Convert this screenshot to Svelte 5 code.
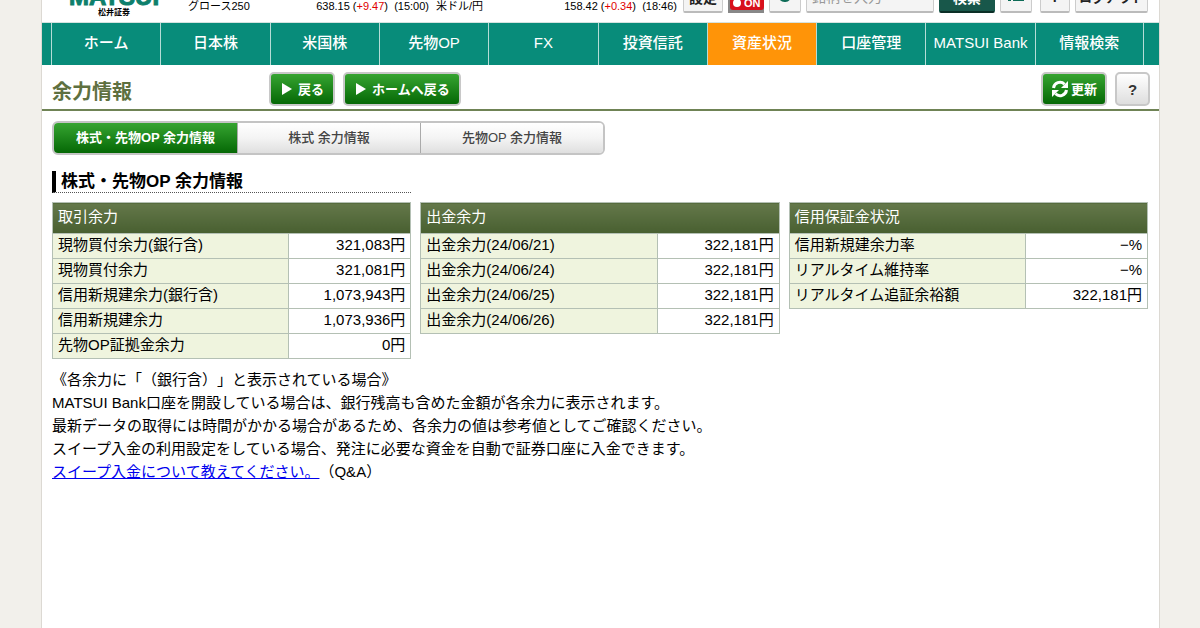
<script>
    const menu = ["ホーム", "日本株", "米国株", "先物OP", "FX", "投資信託", "資産状況", "口座管理", "MATSUI Bank", "情報検索"];
    const tabs = ["株式・先物OP 余力情報", "株式 余力情報", "先物OP 余力情報"];

    const tables = [
        {
            title: "取引余力",
            rows: [
                ["現物買付余力(銀行含)", "321,083円"],
                ["現物買付余力", "321,081円"],
                ["信用新規建余力(銀行含)", "1,073,943円"],
                ["信用新規建余力", "1,073,936円"],
                ["先物OP証拠金余力", "0円"],
            ],
        },
        {
            title: "出金余力",
            rows: [
                ["出金余力(24/06/21)", "322,181円"],
                ["出金余力(24/06/24)", "322,181円"],
                ["出金余力(24/06/25)", "322,181円"],
                ["出金余力(24/06/26)", "322,181円"],
            ],
        },
        {
            title: "信用保証金状況",
            rows: [
                ["信用新規建余力率", "−%"],
                ["リアルタイム維持率", "−%"],
                ["リアルタイム追証余裕額", "322,181円"],
            ],
        },
    ];

    let activeMenu = $state("資産状況");
    let activeTab = $state(0);
    let autoUpdate = $state(true);
    let keyword = $state("");
</script>

<div class="page">
    <header>
        <div class="logo">
            <span class="logo-name">MATSUI</span>
            <span class="logo-sub">松井証券</span>
        </div>
        <div class="ticker">
            <span>グロース250</span>
            <span>638.15 (<em>+9.47</em>)&nbsp; (15:00)</span>
        </div>
        <div class="ticker second">
            <span>米ドル/円</span>
            <span>158.42 (<em>+0.34</em>)&nbsp; (18:46)</span>
        </div>
        <div class="tools">
            <button class="tool setting">設定</button>
            <button class="switch" aria-pressed={autoUpdate} onclick={() => (autoUpdate = !autoUpdate)}>
                <span class="switch-face"><span class="knob"></span>ON</span>
            </button>
            <button class="tool icon" aria-label="再読込">
                <svg viewBox="0 0 16 16" width="16" height="16">
                    <path d="M13.5 6.5A6 6 0 1 1 9 2.2" fill="none" stroke="#0d6b57" stroke-width="2" />
                    <path d="M8 0l5 2.5L8.500 5.500z" fill="#0d6b57" />
                </svg>
            </button>
            <input class="tool" type="text" placeholder="銘柄を入力" aria-label="銘柄を入力" bind:value={keyword} />
            <button class="tool search">検索</button>
            <button class="tool icon list" aria-label="一覧">
                <svg viewBox="0 0 18 16" width="18" height="16">
                    <path d="M1 3h3M1 8h3M1 13h3M6 3h11M6 8h11M6 13h11" stroke="#0d6b57" stroke-width="2" />
                </svg>
            </button>
            <button class="tool help">?</button>
            <button class="tool logout">ログアウト</button>
        </div>
    </header>

    <nav>
        {#each menu as item}
            <a href="#menu" class:active={item === activeMenu} onclick={() => (activeMenu = item)}>{item}</a>
        {/each}
    </nav>

    <div class="title-bar">
        <h1>余力情報</h1>
        <button class="green"><span class="arrow"></span>戻る</button>
        <button class="green"><span class="arrow"></span>ホームへ戻る</button>
        <button class="green refresh">
            <svg viewBox="0 0 18 18" width="18" height="18">
                <path d="M2.500 8A6.500 6.500 0 0 1 13.500 4.200" fill="none" stroke="#fff" stroke-width="3" />
                <path d="M17 1v7h-7z" fill="#fff" />
                <path d="M15.500 10A6.500 6.500 0 0 1 4.500 13.800" fill="none" stroke="#fff" stroke-width="3" />
                <path d="M1 17v-7h7z" fill="#fff" />
            </svg>
            更新
        </button>
        <button class="question">?</button>
    </div>

    <main>
        <div class="tabs">
            {#each tabs as tab, i}
                <button class:active={i === activeTab} onclick={() => (activeTab = i)}>{tab}</button>
            {/each}
        </div>

        <div class="columns">
            <h2>株式・先物OP 余力情報</h2>
            {#each tables as table}
                <table>
                    <colgroup>
                        <col class="label-col" />
                        <col />
                    </colgroup>
                    <thead>
                        <tr><th colspan="2">{table.title}</th></tr>
                    </thead>
                    <tbody>
                        {#each table.rows as [label, value]}
                            <tr>
                                <th scope="row">{label}</th>
                                <td>{value}</td>
                            </tr>
                        {/each}
                    </tbody>
                </table>
            {/each}
        </div>

        <div class="notes">
            <p>《各余力に「（銀行含）」と表示されている場合》</p>
            <p>MATSUI Bank口座を開設している場合は、銀行残高も含めた金額が各余力に表示されます。</p>
            <p>最新データの取得には時間がかかる場合があるため、各余力の値は参考値としてご確認ください。</p>
            <p>スイープ入金の利用設定をしている場合、発注に必要な資金を自動で証券口座に入金できます。</p>
            <p><a href="#qa">スイープ入金について教えてください。</a>（Q&amp;A）</p>
        </div>
    </main>
</div>

<style>
    :global(body) {
        background: #f2f0eb;
    }

    .page {
        min-height: 100vh;
        margin: 0 40px 0 41px;
        box-sizing: border-box;
        background: #fff;
        border: solid #dcd9d3;
        border-width: 0 1px;
        color: #000;
        font-family: "Liberation Sans", "Noto Sans CJK JP", sans-serif;
        font-size: 15px;
        text-spacing-trim: space-all;
    }

    button,
    input {
        box-sizing: border-box;
        margin: 0;
        padding: 0;
        font-family: inherit;
        white-space: nowrap;
    }

    /* Header, its upper part scrolled away */
    header {
        display: flex;
        align-items: flex-end;
        height: 22px;
        overflow: hidden;
        padding: 0 11px 0 26px;
        font-size: 11px;
        border-bottom: 1px solid #d5e3e0;
    }
    .logo {
        width: 92px;
        margin-right: 28px;
        padding-bottom: 4px;
        display: flex;
        flex-direction: column;
        align-items: center;
    }
    .logo-name {
        font-size: 24px;
        line-height: 22px;
        font-weight: bold;
        color: #0d7f6c;
        -webkit-text-stroke: 1px #0d7f6c;
    }
    .logo-sub {
        font-size: 8px;
        line-height: 10px;
        font-weight: bold;
    }
    .ticker {
        width: 241px;
        display: flex;
        justify-content: space-between;
        line-height: 16px;
        padding-bottom: 8px;
        white-space: nowrap;
    }
    .ticker.second {
        margin-left: 7px;
    }
    .ticker em {
        font-style: normal;
        color: #e00000;
    }
    .tools {
        flex: 1;
        display: flex;
        align-items: flex-end;
        justify-content: flex-end;
        gap: 5px;
        padding-bottom: 9px;
    }
    .tool {
        height: 30px;
        flex: none;
        padding-bottom: 2px;
        background: #f4f4f4;
        border: 1px solid #ccc;
        border-bottom: 2px solid #bbb;
        border-radius: 2px;
        font-size: 14px;
        font-weight: bold;
        color: #222;
    }
    .setting {
        width: 40px;
    }
    .icon {
        width: 32px;
    }
    .help {
        width: 30px;
        margin-left: 3px;
    }
    .logout {
        width: 73px;
        font-size: 13px;
    }
    input.tool {
        width: 128px;
        padding: 0 5px 2px;
        font-weight: normal;
    }
    input::placeholder {
        color: #999;
    }
    .search {
        width: 56px;
        background: #18574a;
        border-color: #18574a #18574a #0b2f27;
        color: #fff;
    }
    .switch {
        width: 36px;
        height: 24px;
        padding: 3px 2px;
        display: flex;
        align-items: flex-end;
        background: #888;
        border: 0;
    }
    .switch-face {
        flex: 1;
        display: flex;
        align-items: center;
        gap: 3px;
        height: 14px;
        padding: 0 3px;
        border-radius: 3px;
        background: #d8101c;
        color: #fff;
        font-size: 11px;
        line-height: 12px;
        font-weight: bold;
    }
    .knob {
        width: 8px;
        height: 8px;
        border-radius: 50%;
        background: #fff;
    }

    /* Main menu */
    nav {
        display: grid;
        grid-template-columns: repeat(10, 1fr);
        padding: 0 15px 0 9px;
        background: #088c7a;
    }
    nav a {
        border-left: 1px solid #b5dcd6;
        color: #fff;
        text-align: center;
        text-decoration: none;
        font-weight: 500;
        line-height: 40px;
        height: 42px;
        white-space: nowrap;
    }
    nav a:last-child {
        border-right: 1px solid #b5dcd6;
    }
    nav a.active {
        background: #ff9408;
    }

    .title-bar {
        display: flex;
        align-items: flex-end;
        gap: 8px;
        height: 41px;
        padding: 0 9px 3px 10px;
        border-bottom: 2px solid #6f8355;
    }
    h1 {
        width: 209px;
        margin: 0;
        font-size: 20px;
        line-height: 28px;
        color: #5e7040;
    }
    .green,
    .question {
        height: 34px;
        border: 2px solid #c8c8c8;
        border-radius: 5px;
        font-size: 13px;
        font-weight: bold;
    }
    .green {
        display: flex;
        align-items: center;
        gap: 6px;
        padding: 0 9px 1px 11px;
        background: linear-gradient(#36a431, #056805);
        color: #fff;
    }
    .arrow {
        border: solid transparent;
        border-width: 6px 0 6px 10px;
        border-left-color: #fff;
    }
    .refresh {
        gap: 2px;
        margin-left: auto;
        padding: 0 8px 1px;
    }
    .question {
        width: 35px;
        background: linear-gradient(#fff, #dedede);
        color: #333;
        font-size: 15px;
    }

    main {
        padding: 10px 11px 0 10px;
    }
    .tabs {
        display: flex;
        width: fit-content;
        border: 2px solid #c4c4c4;
        border-radius: 6px;
        overflow: hidden;
    }
    .tabs button {
        width: 183px;
        height: 30px;
        padding-bottom: 4px;
        border: 0;
        background: linear-gradient(#fff, #f4f4f4 50%, #dfdfdf);
        color: #444;
        font-size: 13px;
        font-weight: 500;
    }
    .tabs button + button {
        border-left: 1px solid #aaa;
    }
    .tabs button.active {
        background: linear-gradient(#36a431, #056805);
        color: #fff;
        font-weight: bold;
    }

    .columns {
        display: grid;
        grid-template-columns: repeat(3, 1fr);
        align-items: start;
        column-gap: 9px;
        row-gap: 9px;
        margin-top: 16px;
    }
    h2 {
        grid-row: 1;
        margin: 0;
        padding-left: 5px;
        border-left: 4px solid #000;
        border-bottom: 1px dotted #555;
        font-size: 17px;
        line-height: 21px;
        white-space: nowrap;
    }
    table {
        grid-row: 2;
        width: 100%;
        border-collapse: collapse;
        table-layout: fixed;
    }
    .label-col {
        width: 66%;
    }
    th,
    td {
        height: 22px;
        padding: 0 5px 2px;
        border: 1px solid #b4c0b4;
        font-weight: normal;
        line-height: 22px;
        white-space: nowrap;
    }
    th {
        text-align: left;
    }
    tbody th {
        background: #eff4de;
    }
    td {
        text-align: right;
    }
    thead th {
        height: 28px;
        background: linear-gradient(#64784a, #485f30);
        color: #fff;
    }

    .notes {
        margin-top: 9px;
    }
    .notes p {
        margin: 0;
        line-height: 23px;
    }
    .notes a {
        color: #0000ee;
    }
</style>
